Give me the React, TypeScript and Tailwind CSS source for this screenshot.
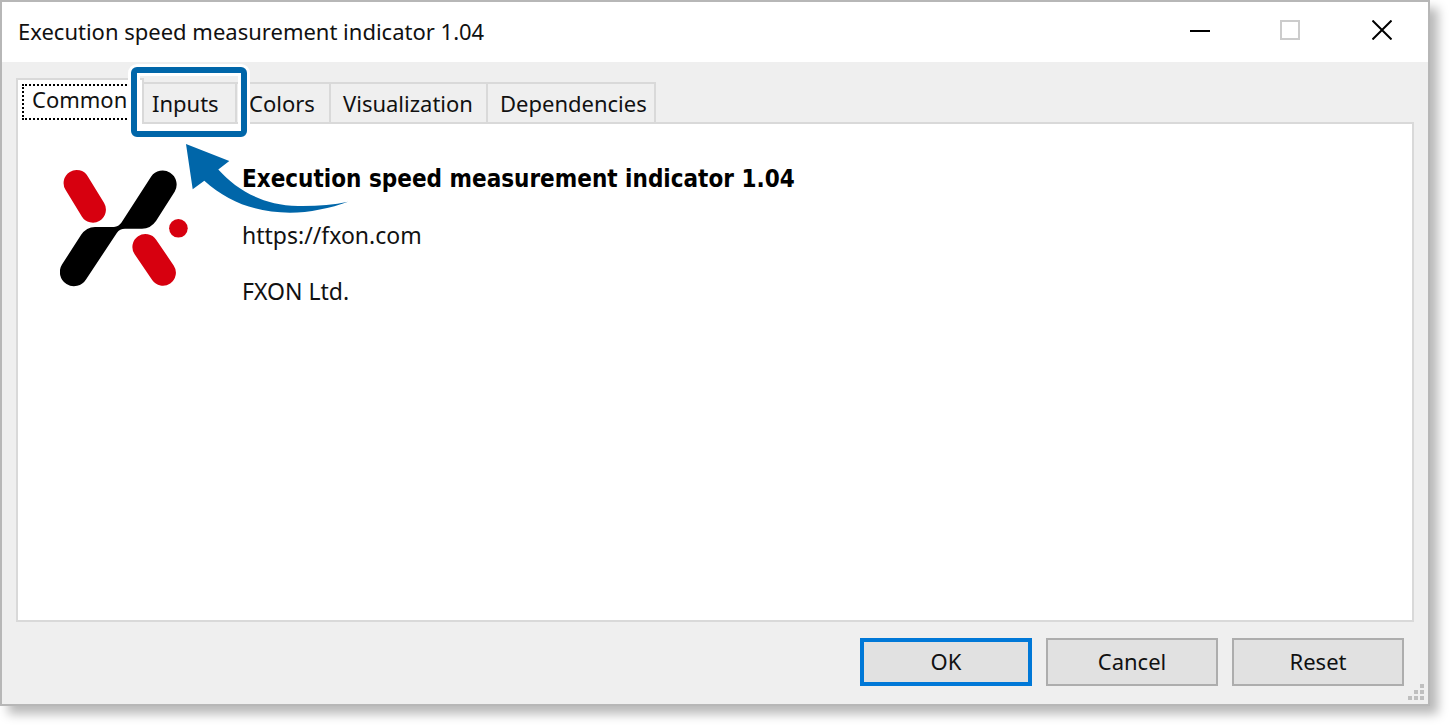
import { useState } from "react";
import type { ReactNode } from "react";

const otherTabs = [
  { name: "Inputs", size: "w-[93px] pl-2" },
  { name: "Colors", size: "w-[94px] pl-3" },
  { name: "Visualization", size: "w-[157px] pl-3" },
  { name: "Dependencies", size: "w-[168px] pl-3" },
];

function Logo() {
  return (
    <svg
      className="mt-[3px] shrink-0"
      width="130"
      height="120"
      viewBox="60 168 130 120"
      role="img"
      aria-label="FXON"
    >
      <path
        d="M151.2 176.5 A14 14 0 0 1 174.8 191.5 L156 221 Q150.5 228.8 142 228.8 L125 228.8 Q119.8 228.8 116.8 233 L86 279.5 A14 14 0 0 1 62 264.5 L81 235 Q86.5 227 95 227 L114 227 Q118.6 226.8 121.5 222.6 Z"
        fill="#000"
      />
      <g stroke="#d7000f" strokeWidth="26" strokeLinecap="round">
        <path d="M76.6 183 L92.9 209.6" />
        <path d="M145.4 247 L162.9 272.7" />
      </g>
      <circle cx="178.4" cy="228.3" r="9.3" fill="#d7000f" />
    </svg>
  );
}

function Callout() {
  return (
    <span className="pointer-events-none absolute -left-[13px] -top-[17px] z-10 block h-[70px] w-[116px]">
      <span className="block h-full w-full rounded-[6px] border-[6px] border-[#0066a9] shadow-[0_0_0_3px_#fff,inset_0_0_0_3px_#fff]" />
      <svg
        className="absolute left-[55px] top-[77px]"
        width="164"
        height="70"
        viewBox="0 0 164 70"
        aria-hidden="true"
      >
        <path
          d="M0 0 L43.3 17 L32.3 25.5 C50 45 75 61 112 62 C130 62.3 147 61 162 57.7 C145 64 123 68.7 104 68.7 C70 68.5 42 58 18.3 36.7 L6.7 45.3 Z"
          fill="#0066a9"
        />
      </svg>
    </span>
  );
}

function CaptionButton({
  label,
  size,
  disabled,
  children,
}: {
  label: string;
  size: string;
  disabled?: boolean;
  children: ReactNode;
}) {
  return (
    <button
      type="button"
      aria-label={label}
      disabled={disabled}
      className={`flex h-14 items-center justify-center ${size}`}
    >
      <svg width="20" height="20" viewBox="0 0 20 20" fill="none" strokeWidth="2">
        {children}
      </svg>
    </button>
  );
}

function DialogButton({ label, border }: { label: string; border: string }) {
  return (
    <button
      type="button"
      className={`flex h-12 w-[172px] items-center justify-center bg-[#e1e1e1] pb-[2px] text-[22px] leading-[30px] ${border}`}
    >
      {label}
    </button>
  );
}

export default function App() {
  const [active, setActive] = useState("Common");

  return (
    <div className="flex min-h-screen bg-white pb-5 pr-5 font-['Noto_Sans',sans-serif] text-[22px] leading-[30px] text-[#111]">
      <main className="relative flex flex-1 flex-col border-2 border-[#b7b7b7] bg-[#efefef] shadow-[8px_8px_10px_rgba(0,0,0,0.28)]">
        <header className="flex h-[60px] items-start justify-between bg-white">
          <h1 className="self-center pb-[2px] pl-4">Execution speed measurement indicator 1.04</h1>
          <div className="flex">
            <CaptionButton label="Minimize" size="w-[88px]">
              <path d="M0 11 H20" stroke="#000" />
            </CaptionButton>
            <CaptionButton label="Maximize" size="w-[92px]" disabled>
              <path d="M1 1 H19 V19 H1 Z" stroke="#ccc" />
            </CaptionButton>
            <CaptionButton label="Close" size="w-[92px]">
              <path d="M0.5 0.5 L19.5 19.5 M19.5 0.5 L0.5 19.5" stroke="#000" />
            </CaptionButton>
          </div>
        </header>

        <div className="flex flex-1 flex-col px-[14px] pb-[18px] pt-4">
          <div role="tablist" className="z-10 -mb-[2px] flex items-end">
            <button
              type="button"
              role="tab"
              aria-selected={active === "Common"}
              onClick={() => setActive("Common")}
              className="flex h-[46px] w-[128px] border-2 border-b-0 border-[#d9d9d9] bg-white p-1"
            >
              <span className="flex h-9 flex-1 items-center border-2 border-dotted border-black pb-[6px] pl-2">
                Common
              </span>
            </button>
            {otherTabs.map((tab) => (
              <button
                key={tab.name}
                type="button"
                role="tab"
                aria-selected={active === tab.name}
                onClick={() => setActive(tab.name)}
                className={`relative flex h-[42px] items-center border-y-2 border-r-2 border-[#d9d9d9] bg-[#efefef] ${tab.size}`}
              >
                {tab.name}
                {tab.name === "Inputs" && <Callout />}
              </button>
            ))}
          </div>

          <section
            role="tabpanel"
            className="flex flex-1 items-start gap-[52px] border-2 border-[#d9d9d9] bg-white pl-[42px] pt-[41px]"
          >
            <Logo />
            <div className="flex flex-col gap-7 text-[23px] leading-7">
              <h2 className="font-['DejaVu_Sans_Condensed','DejaVu_Sans',sans-serif] text-[24px] font-bold leading-7 text-black">
                Execution speed measurement indicator 1.04
              </h2>
              <a href="https://fxon.com">https://fxon.com</a>
              <p>FXON Ltd.</p>
            </div>
          </section>

          <footer className="mt-4 flex justify-end gap-[14px] pr-[10px]">
            <DialogButton label="OK" border="border-4 border-[#0078d7]" />
            <DialogButton label="Cancel" border="border-2 border-[#adadad]" />
            <DialogButton label="Reset" border="border-2 border-[#adadad]" />
          </footer>
        </div>

        <svg
          className="absolute bottom-1 right-1"
          width="16"
          height="16"
          viewBox="0 0 16 16"
          fill="#bfbfbf"
          aria-hidden="true"
        >
          <path d="M12 0h4v4h-4z M6 6h4v4h-4z M12 6h4v4h-4z M0 12h4v4h-4z M6 12h4v4h-4z M12 12h4v4h-4z" />
        </svg>
      </main>
    </div>
  );
}
